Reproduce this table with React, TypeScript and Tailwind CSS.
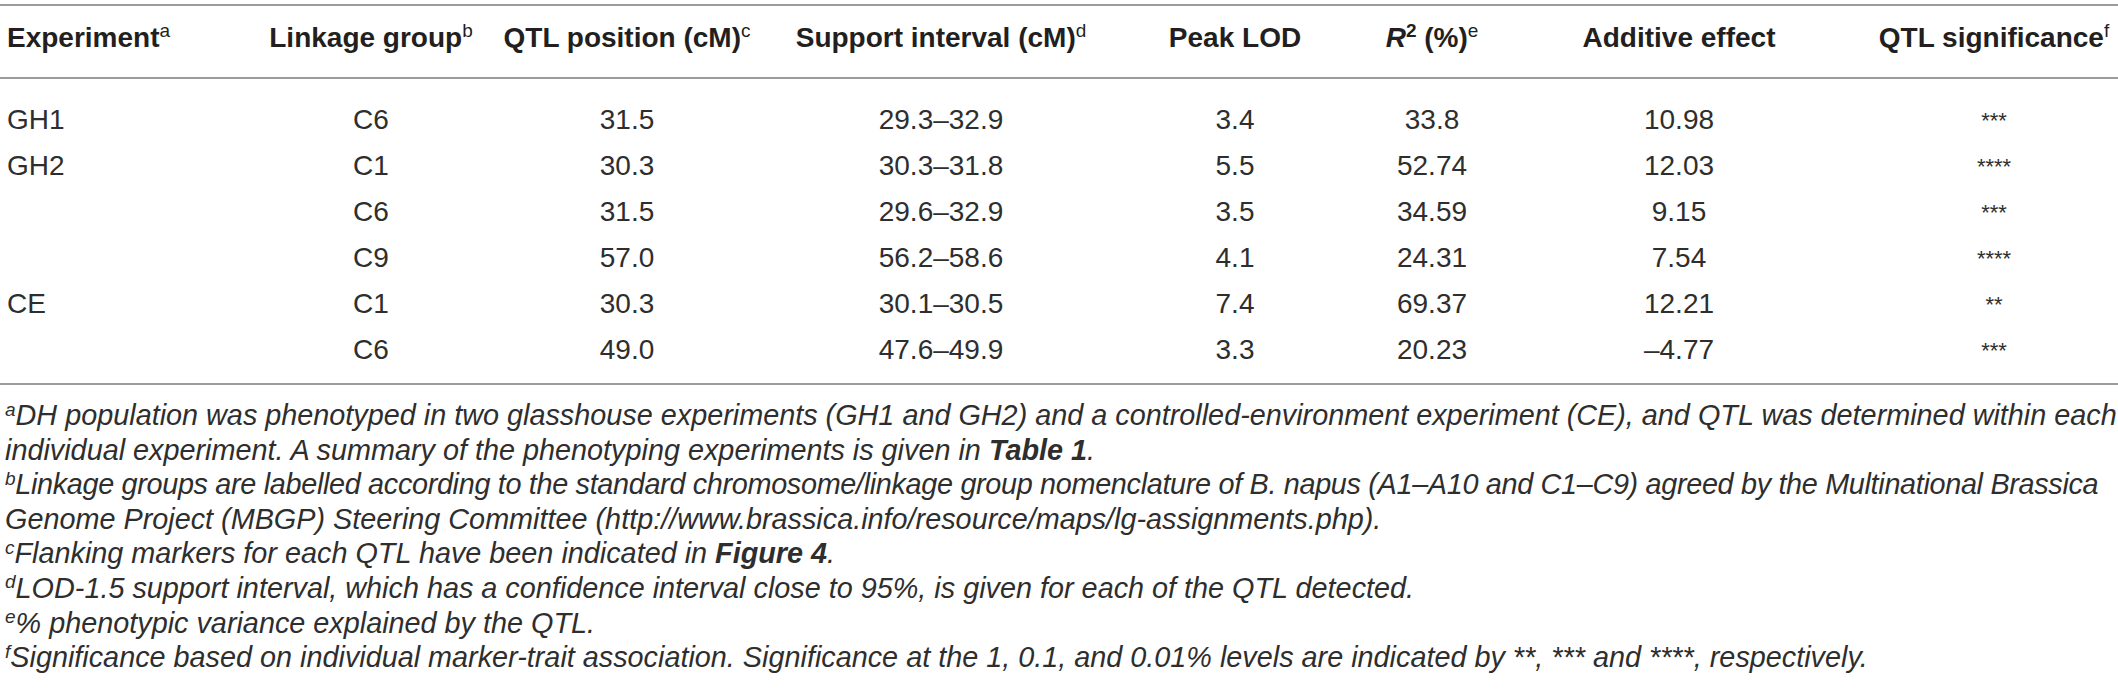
import React from "react";

const COLS =
  "grid grid-cols-[250px_242px_270px_358px_230px_164px_330px_274px] items-center";

const rows: string[][] = [
  ["GH1", "C6", "31.5", "29.3–32.9", "3.4", "33.8", "10.98", "***"],
  ["GH2", "C1", "30.3", "30.3–31.8", "5.5", "52.74", "12.03", "****"],
  ["", "C6", "31.5", "29.6–32.9", "3.5", "34.59", "9.15", "***"],
  ["", "C9", "57.0", "56.2–58.6", "4.1", "24.31", "7.54", "****"],
  ["CE", "C1", "30.3", "30.1–30.5", "7.4", "69.37", "12.21", "**"],
  ["", "C6", "49.0", "47.6–49.9", "3.3", "20.23", "–4.77", "***"],
];

function Sup({ children }: { children: React.ReactNode }) {
  return <sup className="font-normal text-[19px]">{children}</sup>;
}

export default function App() {
  return (
    <div className="w-[2118px] h-[696px] bg-white text-[#2e2e2e] font-['Liberation_Sans',Arial,sans-serif] overflow-hidden pt-[4px]">
      <div className="border-t-2 border-[#9c9c9c]">
        <div className={`${COLS} h-[73px] pb-[8px] text-[28px] font-bold text-[#231f20] whitespace-nowrap border-b-2 border-[#9c9c9c]`}>
          <div className="pl-[7px]">
            Experiment<Sup>a</Sup>
          </div>
          <div className="text-center">
            Linkage group<Sup>b</Sup>
          </div>
          <div className="text-center">
            QTL position (cM)<Sup>c</Sup>
          </div>
          <div className="text-center">
            Support interval (cM)<Sup>d</Sup>
          </div>
          <div className="text-center">Peak LOD</div>
          <div className="text-center">
            <i>R</i>
            <sup className="text-[19px]">2</sup> (%)<Sup>e</Sup>
          </div>
          <div className="text-center">Additive effect</div>
          <div className="text-center pl-[26px]">
            QTL significance<Sup>f</Sup>
          </div>
        </div>
        <div className="pt-[18px] pb-[10px] border-b-2 border-[#9c9c9c] text-[28px] whitespace-nowrap">
          {rows.map((r, i) => (
            <div key={i} className={`${COLS} h-[46px]`}>
              <div className="pl-[7px]">{r[0]}</div>
              <div className="text-center">{r[1]}</div>
              <div className="text-center">{r[2]}</div>
              <div className="text-center">{r[3]}</div>
              <div className="text-center">{r[4]}</div>
              <div className="text-center">{r[5]}</div>
              <div className="text-center">{r[6]}</div>
              <div className="text-center pl-[26px] text-[22px]">{r[7]}</div>
            </div>
          ))}
        </div>
        <div className="pt-[13px] pl-[5px] italic text-[28.8px] leading-[34.6px] whitespace-nowrap">
          <p>
            <Sup>a</Sup>DH population was phenotyped in two glasshouse experiments (GH1 and GH2) and a controlled-environment experiment (CE), and QTL was determined within each
          </p>
          <p>
            individual experiment. A summary of the phenotyping experiments is given in <b>Table 1</b>.
          </p>
          <p className="tracking-[-0.32px]">
            <Sup>b</Sup>Linkage groups are labelled according to the standard chromosome/linkage group nomenclature of B. napus (A1–A10 and C1–C9) agreed by the Multinational Brassica
          </p>
          <p>
            Genome Project (MBGP) Steering Committee (http://www.brassica.info/resource/maps/lg-assignments.php).
          </p>
          <p>
            <Sup>c</Sup>Flanking markers for each QTL have been indicated in <b>Figure 4</b>.
          </p>
          <p>
            <Sup>d</Sup>LOD-1.5 support interval, which has a confidence interval close to 95%, is given for each of the QTL detected.
          </p>
          <p>
            <Sup>e</Sup>% phenotypic variance explained by the QTL.
          </p>
          <p>
            <Sup>f</Sup>Significance based on individual marker-trait association. Significance at the 1, 0.1, and 0.01% levels are indicated by **, *** and ****, respectively.
          </p>
        </div>
      </div>
    </div>
  );
}
